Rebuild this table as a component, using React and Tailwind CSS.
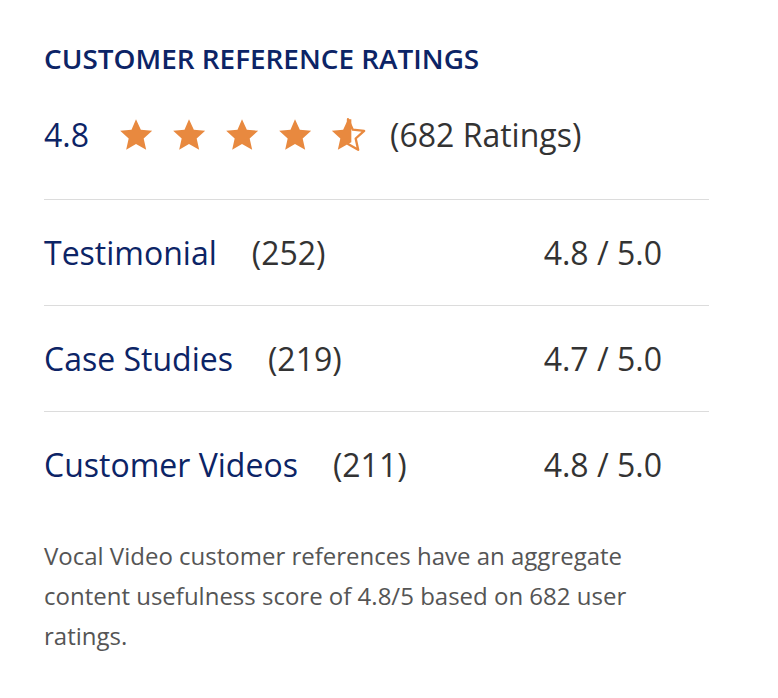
const NAVY = "text-[#0c2466]";

const Star = ({ half }) => (
  <svg width="40" height="40" viewBox="0 0 24 24" className="shrink-0">
    {half ? (
      <>
        <path
          d="M12 2.5l2.9 6.3 6.8.7-5.1 4.6 1.5 6.8L12 17.4V2.5z"
          fill="none"
          stroke="#e8893f"
          strokeWidth="1.4"
          strokeLinejoin="round"
        />
        <path
          d="M12 2.5L9.1 8.8l-6.8.7 5.1 4.6-1.5 6.8L12 17.4l2-1.1V2.5z"
          fill="#e8893f"
        />
      </>
    ) : (
      <path
        d="M12 2.5l2.9 6.3 6.8.7-5.1 4.6 1.5 6.8L12 17.4l-5.9 3.5 1.5-6.8-5.1-4.6 6.8-.7z"
        fill="#e8893f"
      />
    )}
  </svg>
);

const rows = [
  { label: "Testimonial", count: 252, score: "4.8 / 5.0" },
  { label: "Case Studies", count: 219, score: "4.7 / 5.0" },
  { label: "Customer Videos", count: 211, score: "4.8 / 5.0" },
];

export default function App() {
  return (
    <div
      className="bg-white w-[778px] h-[698px] pl-[44px] pr-[69px] pt-[40px]"
      style={{ fontFamily: "'Open Sans', sans-serif" }}
    >
      {/* Heading */}
      <h2 className={`${NAVY} text-[27.9px] font-semibold leading-[36px]`}>
        CUSTOMER REFERENCE RATINGS
      </h2>

      {/* Overall rating */}
      <div className="flex items-center mt-[37px] h-[44px]">
        <span className={`${NAVY} text-[32px] mr-[27px]`}>4.8</span>
        <div className="flex items-center gap-[13px]">
          <Star />
          <Star />
          <Star />
          <Star />
          <Star half />
        </div>
        <span className="text-[#333] text-[32px] ml-[22px]">(682 Ratings)</span>
      </div>

      {/* Breakdown */}
      <div className="mt-[42px] border-t border-[#dcdcdc]">
        {rows.map((row, i) => (
          <div
            key={i}
            className="flex items-center h-[106px] border-b border-[#dcdcdc] last:border-b-0"
          >
            <span className={`${NAVY} text-[32px]`}>{row.label}</span>
            <span className="text-[#333] text-[32px] ml-[35px]">({row.count})</span>
            <span className="text-[#333] text-[32px] ml-auto mr-[47px]">{row.score}</span>
          </div>
        ))}
      </div>

      {/* Footnote */}
      <p className="text-[#555] text-[24px] leading-[40px] mt-[18px] w-[620px]">
        Vocal Video customer references have an aggregate content usefulness score
        of 4.8/5 based on 682 user ratings.
      </p>
    </div>
  );
}
